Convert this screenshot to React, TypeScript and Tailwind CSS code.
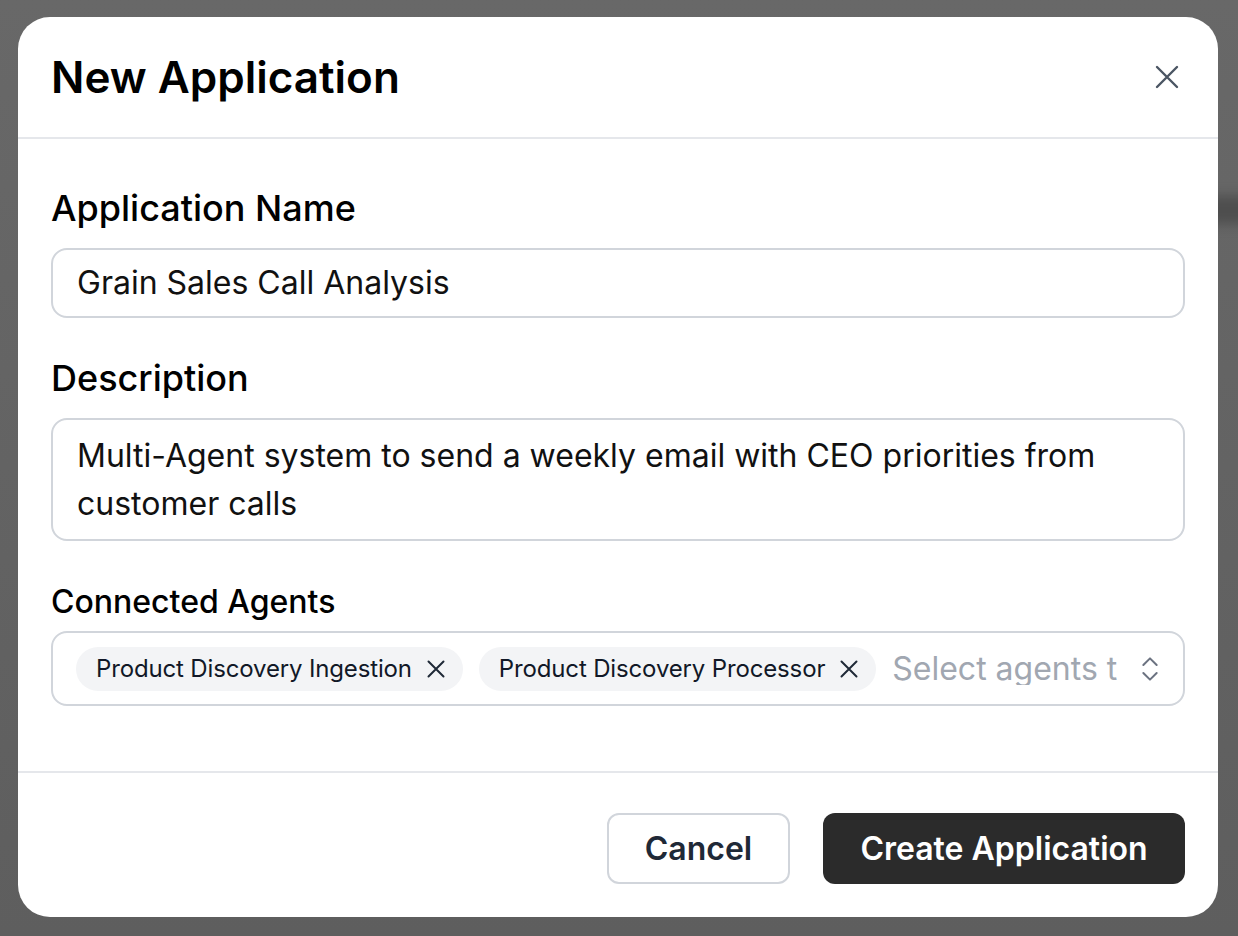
import React from "react";

function XIcon({ size, className }: { size: number; className?: string }) {
  return (
    <svg width={size} height={size} viewBox="0 0 24 24" fill="none" className={className}>
      <path d="M2 2L22 22M22 2L2 22" stroke="currentColor" strokeWidth="2.4" strokeLinecap="round" />
    </svg>
  );
}

function Chip({ label }: { label: string }) {
  return (
    <div className="flex h-[44px] shrink-0 items-center gap-[15px] rounded-full bg-[#f3f4f6] pl-[20px] pr-[18px]">
      <span className="whitespace-nowrap text-[24px] leading-none tracking-[-0.15px] text-[#111827]">{label}</span>
      <svg width="18" height="18" viewBox="0 0 18 18" fill="none" className="shrink-0 text-[#1f2937]">
        <path d="M1.5 1.5L16.5 16.5M16.5 1.5L1.5 16.5" stroke="currentColor" strokeWidth="2" strokeLinecap="round" />
      </svg>
    </div>
  );
}

export default function App() {
  return (
    <div
      className="relative h-[936px] w-[1238px] overflow-hidden bg-gradient-to-b from-[#686868] to-[#5e5e5e] pl-[18px] pt-[17px]"
      style={{ fontFamily: "Inter, 'Noto Sans', sans-serif" }}
    >
      <div className="absolute right-[-20px] top-[196px] h-[28px] w-[60px] rounded-full bg-[#4e4e4e] blur-[6px]" />
      <div className="relative flex h-[900px] w-[1200px] flex-col rounded-[32px] bg-white">
        <div className="flex h-[122px] shrink-0 items-center justify-between border-b-2 border-[#e5e7eb] pl-[33px] pr-[39px]">
          <h1 className="text-[44px] font-semibold leading-none text-black">New Application</h1>
          <XIcon size={24} className="text-[#4b5563]" />
        </div>
        <div className="flex flex-1 flex-col px-[33px] pt-[45px]">
          <label className="mb-4 text-[36px] font-medium leading-[48px] text-black">Application Name</label>
          <div className="flex h-[70px] items-center rounded-[16px] border-2 border-[#d1d5db] px-6">
            <span className="text-[32px] leading-none text-[#111111]">Grain Sales Call Analysis</span>
          </div>
          <label className="mb-4 mt-[36px] text-[36px] font-medium leading-[48px] text-black">Description</label>
          <div className="h-[123px] rounded-[16px] border-2 border-[#d1d5db] px-6 py-[12px]">
            <p className="text-[32px] leading-[48px] text-[#111111]">
              Multi-Agent system to send a weekly email with CEO priorities from customer calls
            </p>
          </div>
          <label className="mb-[5px] mt-[37px] text-[32px] font-medium leading-[48px] text-black">Connected Agents</label>
          <div className="flex h-[75px] items-center gap-4 rounded-[16px] border-2 border-[#d1d5db] pl-[23px] pr-[17px]">
            <Chip label="Product Discovery Ingestion" />
            <Chip label="Product Discovery Processor" />
            <div className="min-w-0 flex-1 overflow-hidden whitespace-nowrap text-[32px] leading-none text-[#a1a7b1]">
              Select agents to connect
            </div>
            <svg width="32" height="32" viewBox="0 0 24 24" fill="none" className="shrink-0 text-[#6b7280]">
              <path d="m7 15 5 5 5-5M7 9l5-5 5 5" stroke="currentColor" strokeWidth="1.5" strokeLinecap="round" strokeLinejoin="round" />
            </svg>
          </div>
        </div>
        <div className="flex h-[146px] shrink-0 items-start justify-end gap-[33px] border-t-2 border-[#e5e7eb] px-[33px] pt-[40px]">
          <button className="flex h-[71px] w-[183px] items-center justify-center rounded-[12px] border-2 border-[#d1d5db] bg-white text-[32px] font-semibold text-[#1f2937]">
            Cancel
          </button>
          <button className="flex h-[71px] w-[362px] items-center justify-center rounded-[12px] bg-[#2b2b2b] text-[32px] font-semibold text-white">
            Create Application
          </button>
        </div>
      </div>
    </div>
  );
}
